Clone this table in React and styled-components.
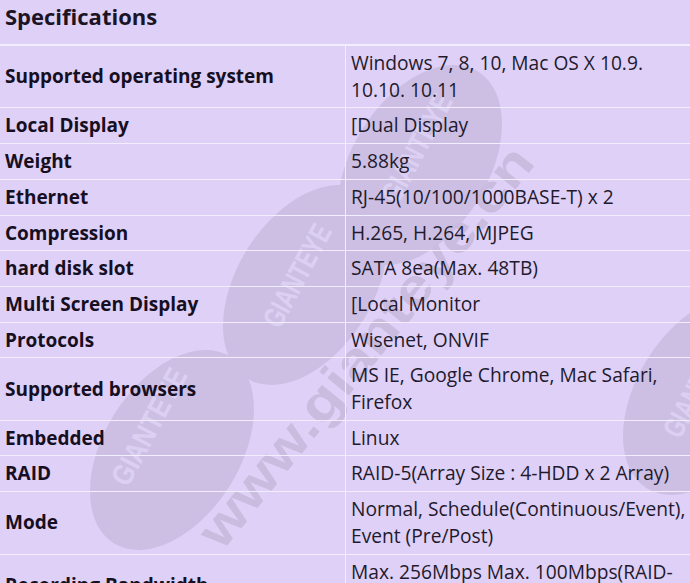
import React from 'react'
import styled, { createGlobalStyle } from 'styled-components'

const GlobalStyle = createGlobalStyle`
  body {
    margin: 0;
    background: #dfd0f8;
    font-family: 'Open Sans', 'Noto Sans', sans-serif;
  }
`

const Page = styled.div`
  position: relative;
  width: 690px;
  min-height: 583px;
  overflow: hidden;
  background: #dfd0f8;
`

const Watermark = styled.svg`
  position: absolute;
  left: 0;
  top: 0;
  width: 690px;
  height: 700px;
  pointer-events: none;
`

const Content = styled.div`
  position: relative;
`

const Title = styled.h2`
  margin: 0;
  height: 45px;
  padding: 0 5px;
  font-size: 22px;
  line-height: 33px;
  font-weight: 700;
  color: #1b1424;
  border-bottom: 1px solid #f3eefd;
  box-sizing: border-box;
`

const Table = styled.table`
  width: 100%;
  border-collapse: collapse;
  table-layout: fixed;
`

const Row = styled.tr`
  border-top: 1px solid #f3eefd;
`

const Label = styled.td`
  width: 335px;
  padding: 4px 5px;
  font-size: 19px;
  line-height: 26.7px;
  font-weight: 700;
  color: #160f22;
  vertical-align: middle;
  border-right: 1px solid #f3eefd;
`

const Value = styled.td`
  padding: 4px 2px 4px 5px;
  font-size: 19.2px;
  line-height: 26.7px;
  color: #221a2c;
  vertical-align: middle;
`

const specs = [
  ['Supported operating system', 'Windows 7, 8, 10, Mac OS X 10.9. 10.10. 10.11'],
  ['Local Display', '[Dual Display'],
  ['Weight', '5.88kg'],
  ['Ethernet', 'RJ-45(10/100/1000BASE-T) x 2'],
  ['Compression', 'H.265, H.264, MJPEG'],
  ['hard disk slot', 'SATA 8ea(Max. 48TB)'],
  ['Multi Screen Display', '[Local Monitor'],
  ['Protocols', 'Wisenet, ONVIF'],
  ['Supported browsers', 'MS IE, Google Chrome, Mac Safari, Firefox'],
  ['Embedded', 'Linux'],
  ['RAID', 'RAID-5(Array Size : 4-HDD x 2 Array)'],
  ['Mode', 'Normal, Schedule(Continuous/Event), Event (Pre/Post)'],
  ['Recording Bandwidth', 'Max. 256Mbps Max. 100Mbps(RAID-5/6)'],
]

const ovals = [
  { cx: 420, cy: 165, tx: 398, ty: 205, len: 118 },
  { cx: 305, cy: 285, tx: 280, ty: 330, len: 112 },
  { cx: 172, cy: 450, tx: 128, ty: 488, len: 128 },
  { cx: 705, cy: 395, tx: 680, ty: 440, len: 110 },
]

function Marks() {
  return (
    <Watermark viewBox="0 0 690 700">
      {ovals.map((o, i) => (
        <g key={i}>
          <ellipse
            cx={o.cx}
            cy={o.cy}
            rx="110"
            ry="68"
            transform={`rotate(-58 ${o.cx} ${o.cy})`}
            fill="#cdbfe4"
          />
          <text
            transform={`translate(${o.tx} ${o.ty}) rotate(-62)`}
            fontFamily="'Liberation Sans', sans-serif"
            fontWeight="700"
            fontSize="30"
            textLength={o.len}
            lengthAdjust="spacingAndGlyphs"
            fill="#dcd0f2"
          >
            GIANTEYE
          </text>
        </g>
      ))}
      <text
        transform="translate(222 552) rotate(-51)"
        fontFamily="'Liberation Sans', sans-serif"
        fontWeight="700"
        fontSize="52"
        textLength="500"
        lengthAdjust="spacingAndGlyphs"
        fill="#cabcdf"
      >
        www.gianteye.cn
      </text>
    </Watermark>
  )
}

export default function App() {
  return (
    <Page>
      <GlobalStyle />
      <Marks />
      <Content>
        <Title>Specifications</Title>
        <Table>
          <tbody>
            {specs.map(([k, v]) => (
              <Row key={k}>
                <Label>{k}</Label>
                <Value>{v}</Value>
              </Row>
            ))}
          </tbody>
        </Table>
      </Content>
    </Page>
  )
}
